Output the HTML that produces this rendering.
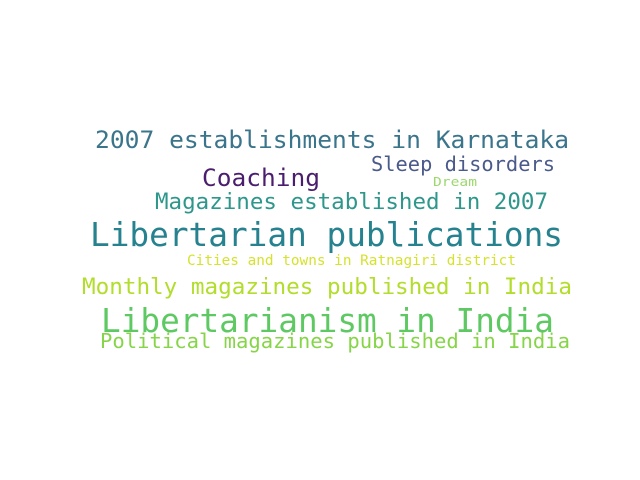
<!DOCTYPE html>
<html><head><style>html,body{margin:0;padding:0;background:#fff;width:640px;height:480px;overflow:hidden}</style></head>
<body>
<svg width="640" height="480" xmlns="http://www.w3.org/2000/svg" font-family="'DejaVu Sans Mono','Liberation Mono',monospace">
<text x="95" y="148" font-size="24" fill="#3b758c" textLength="474" lengthAdjust="spacingAndGlyphs">2007 establishments in Karnataka</text>
<text x="371" y="171" font-size="20" fill="#4a5a8a" textLength="184" lengthAdjust="spacingAndGlyphs">Sleep disorders</text>
<text x="202" y="186" font-size="24" fill="#4b1d6e" textLength="118" lengthAdjust="spacingAndGlyphs">Coaching</text>
<text x="433" y="186" font-size="12" fill="#9bd86e" textLength="44" lengthAdjust="spacingAndGlyphs">Dream</text>
<text x="155" y="209" font-size="22" fill="#2e978c" textLength="393" lengthAdjust="spacingAndGlyphs">Magazines established in 2007</text>
<text x="90" y="246" font-size="32.5" fill="#26828e" textLength="473" lengthAdjust="spacingAndGlyphs">Libertarian publications</text>
<text x="187" y="265" font-size="14" fill="#d5e22e" textLength="329" lengthAdjust="spacingAndGlyphs">Cities and towns in Ratnagiri district</text>
<text x="82" y="294" font-size="22.5" fill="#b2dd2c" textLength="490" lengthAdjust="spacingAndGlyphs">Monthly magazines published in India</text>
<text x="101" y="332" font-size="32.5" fill="#5ec962" textLength="453" lengthAdjust="spacingAndGlyphs">Libertarianism in India</text>
<text x="100" y="348" font-size="20.5" fill="#86d549" textLength="470" lengthAdjust="spacingAndGlyphs">Political magazines published in India</text>
</svg>
</body></html>
